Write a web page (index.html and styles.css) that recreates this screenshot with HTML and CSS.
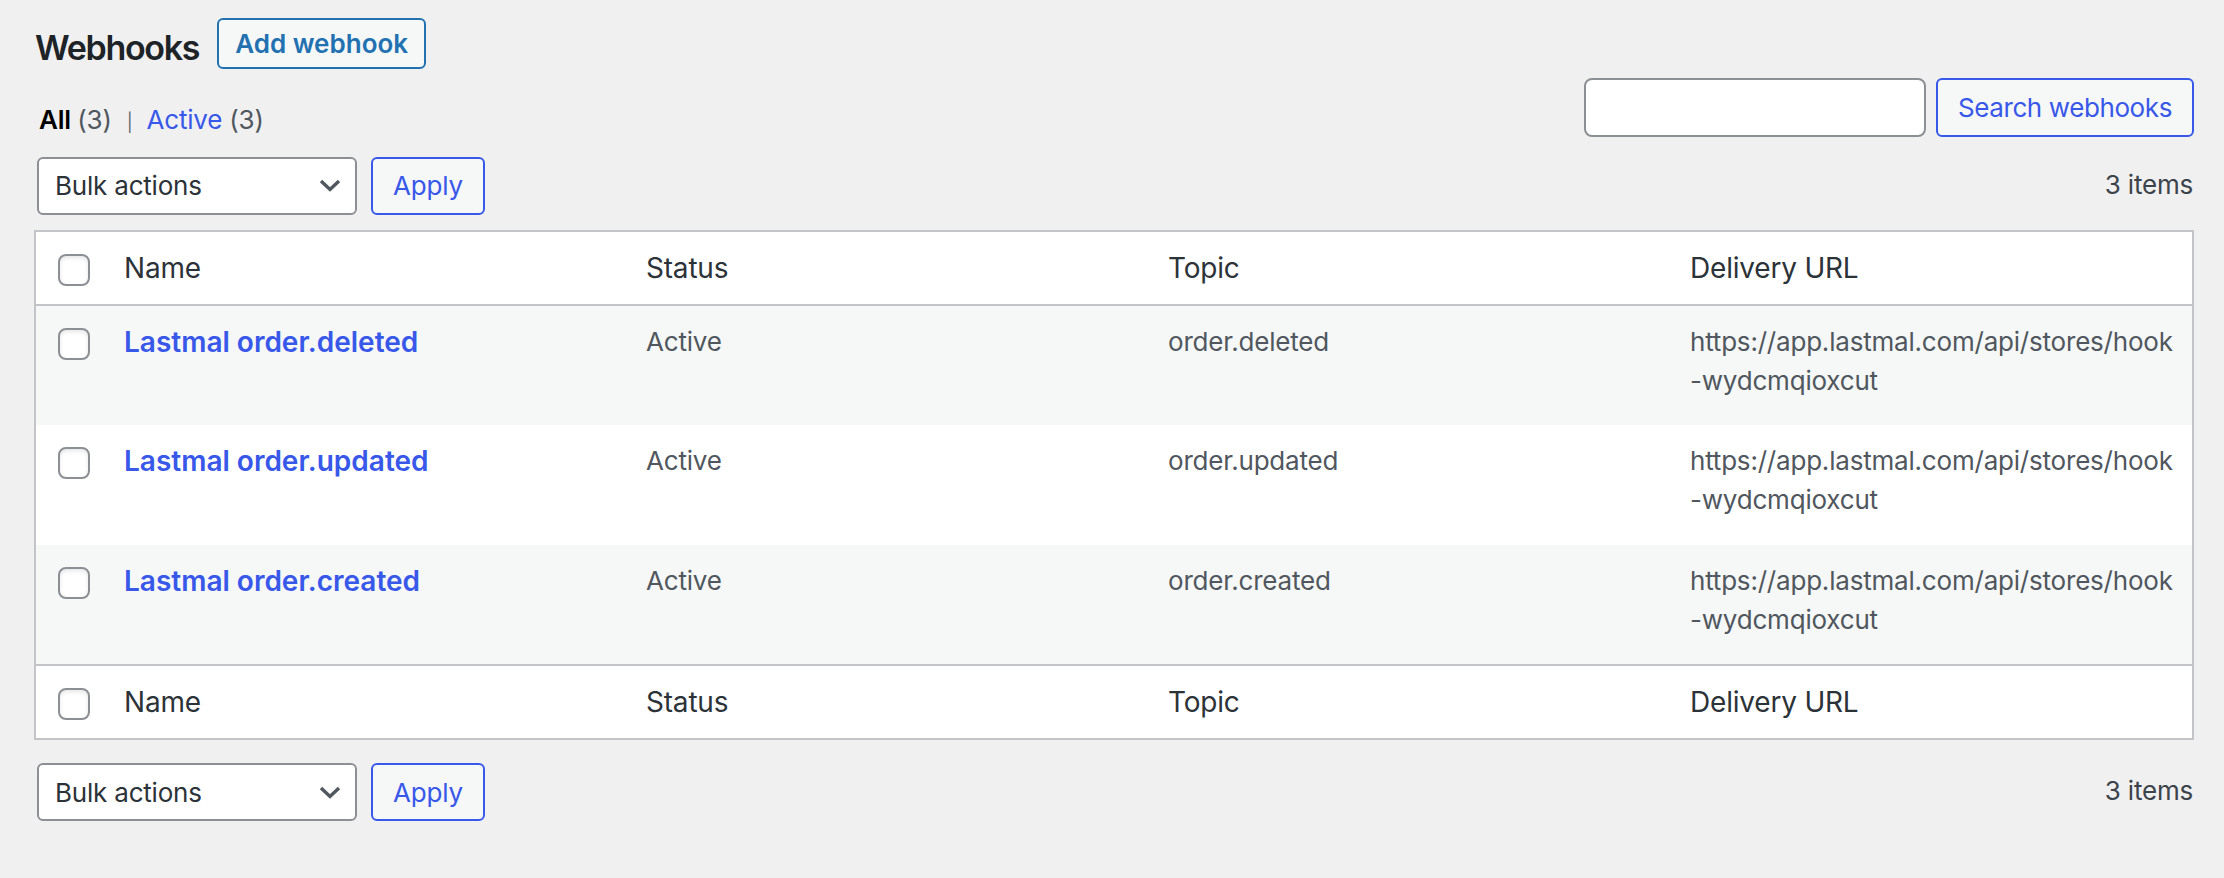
FILE: index.html
```html
<!DOCTYPE html>
<html lang="en">
<head>
<meta charset="utf-8">
<title>Webhooks</title>
<link rel="stylesheet" href="styles.css">
</head>
<body>
<div class="wrap">
  <div class="title-row">
    <h2 class="page-title">Webhooks</h2>
    <a class="btn btn-add" href="#">Add webhook</a>
  </div>

  <div class="filter-row">
    <ul class="subsubsub">
      <li><a class="current" href="#">All <span class="count">(3)</span></a><span class="sep">|</span></li>
      <li><a class="view-link" href="#">Active <span class="count">(3)</span></a></li>
    </ul>
    <div class="search-box">
      <input class="search-input" type="search" aria-label="Search webhooks">
      <button class="btn btn-secondary btn-search" type="button">Search webhooks</button>
    </div>
  </div>

  <div class="tablenav tablenav-top">
    <div class="bulk">
      <div class="select"><span>Bulk actions</span>
        <svg class="chevron" width="22" height="13" viewBox="0 0 22 13"><path d="M2 2 L11 10.5 L20 2" fill="none" stroke="#50575e" stroke-width="3.4"/></svg>
      </div>
      <button class="btn btn-secondary btn-apply" type="button">Apply</button>
    </div>
    <span class="displaying-num">3 items</span>
  </div>

  <table class="list">
    <colgroup><col class="col-check"><col><col><col><col></colgroup>
    <thead>
      <tr>
        <th class="check"><input class="cb" type="checkbox"></th>
        <th>Name</th><th>Status</th><th>Topic</th><th>Delivery URL</th>
      </tr>
    </thead>
    <tbody>
      <tr>
        <td class="check"><input class="cb" type="checkbox"></td>
        <td><a class="row-title" href="#">Lastmal order.deleted</a></td>
        <td>Active</td>
        <td>order.deleted</td>
        <td>https://app.lastmal.com/api/stores/hook<br>-wydcmqioxcut</td>
      </tr>
      <tr>
        <td class="check"><input class="cb" type="checkbox"></td>
        <td><a class="row-title" href="#">Lastmal order.updated</a></td>
        <td>Active</td>
        <td>order.updated</td>
        <td>https://app.lastmal.com/api/stores/hook<br>-wydcmqioxcut</td>
      </tr>
      <tr>
        <td class="check"><input class="cb" type="checkbox"></td>
        <td><a class="row-title" href="#">Lastmal order.created</a></td>
        <td>Active</td>
        <td>order.created</td>
        <td>https://app.lastmal.com/api/stores/hook<br>-wydcmqioxcut</td>
      </tr>
    </tbody>
    <tfoot>
      <tr>
        <th class="check"><input class="cb" type="checkbox"></th>
        <th>Name</th><th>Status</th><th>Topic</th><th>Delivery URL</th>
      </tr>
    </tfoot>
  </table>

  <div class="tablenav tablenav-bottom">
    <div class="bulk">
      <div class="select"><span>Bulk actions</span>
        <svg class="chevron" width="22" height="13" viewBox="0 0 22 13"><path d="M2 2 L11 10.5 L20 2" fill="none" stroke="#50575e" stroke-width="3.4"/></svg>
      </div>
      <button class="btn btn-secondary btn-apply" type="button">Apply</button>
    </div>
    <span class="displaying-num">3 items</span>
  </div>
</div>
</body>
</html>
```

FILE: styles.css
```css
* { box-sizing: border-box; }

body {
  margin: 0;
  background: #f0f0f1;
  font-family: Inter, "Noto Sans", sans-serif;
  color: #3c434a;
  letter-spacing: -0.2px;
}

.wrap {
  padding: 18px 30px 0 34px;
}

/* title */
.title-row {
  display: flex;
  align-items: flex-start;
  height: 51px;
}

.page-title {
  margin: 4px 18px 0 1px;
  font-size: 34px;
  line-height: 51px;
  font-weight: 600;
  letter-spacing: -1.3px;
  color: #1d2327;
}

.btn {
  display: inline-flex;
  align-items: center;
  justify-content: center;
  font-family: inherit;
  font-size: 26px;
  letter-spacing: -0.2px;
  text-decoration: none;
  border-radius: 6px;
  cursor: pointer;
  white-space: nowrap;
}

.btn-add {
  height: 51px;
  padding: 0 16px;
  border: 2px solid #2271b1;
  color: #2271b1;
  background: #f6f7f7;
  font-weight: 600;
  letter-spacing: 0;
}

.btn-secondary {
  height: 58px;
  padding: 0 20px;
  border: 2px solid #3858e9;
  color: #3858e9;
  background: #f6f7f7;
  font-weight: 400;
}

/* filters + search */
.filter-row {
  margin-top: 9px;
  display: flex;
  justify-content: space-between;
  align-items: flex-start;
}

.subsubsub {
  list-style: none;
  margin: 21.5px 0 0 5px;
  padding: 0;
  display: flex;
  height: 40px;
  font-size: 26px;
  line-height: 40px;
  color: #50575e;
}

.subsubsub a {
  text-decoration: none;
}

.subsubsub .current {
  color: #000;
  font-weight: 600;
}

.subsubsub .current .count {
  font-weight: 400;
  color: #50575e;
}

.subsubsub .view-link {
  color: #3858e9;
}

.subsubsub .view-link .count {
  color: #50575e;
}

.subsubsub .sep {
  display: inline-block;
  color: #646970;
  font-size: 18px;
  line-height: 18px;
  margin: 0 14px 0 15px;
}

.search-box {
  display: flex;
  gap: 10px;
}

.search-input {
  width: 342px;
  height: 59px;
  border: 2px solid #8c8f94;
  border-radius: 8px;
  background: #fff;
  margin: 0;
}

.btn-search {
  height: 59px;
  letter-spacing: -0.4px;
}

/* tablenav */
.tablenav {
  display: flex;
  justify-content: space-between;
  align-items: center;
  height: 58px;
}

.tablenav-top {
  margin-top: 17px;
}

.tablenav-bottom {
  margin-top: 23px;
}

.bulk {
  display: flex;
  align-items: center;
  gap: 14px;
  margin-left: 3px;
}

.select {
  width: 320px;
  height: 58px;
  border: 2px solid #8c8f94;
  border-radius: 6px;
  background: #fff;
  padding: 0 14px 0 16px;
  display: flex;
  align-items: center;
  justify-content: space-between;
  font-size: 26px;
  color: #2c3338;
}

.chevron {
  display: block;
}

.displaying-num {
  font-size: 26px;
  color: #3c434a;
  margin-bottom: 3px;
  margin-right: 1px;
}

/* table */
.list {
  width: 100%;
  margin-top: 15px;
  border: 2px solid #c3c4c7;
  border-collapse: separate;
  border-spacing: 0;
  table-layout: fixed;
  background: #fff;
}

.col-check {
  width: 68px;
}

.list th {
  text-align: left;
  font-weight: 400;
  font-size: 28px;
  line-height: 40px;
  padding: 16px 20px;
  color: #2c3338;
  vertical-align: top;
}

.list thead th {
  border-bottom: 2px solid #c3c4c7;
}

.list tfoot th {
  border-top: 2px solid #c3c4c7;
}

.list tbody tr {
  height: 119.5px;
}

.list tbody tr:nth-child(odd) {
  background: #f6f7f7;
}

.list td {
  vertical-align: top;
  padding: 16px 20px;
  font-size: 26px;
  line-height: 39px;
  color: #50575e;
}

.list .check {
  padding: 22px 0 0 22px;
}

.row-title {
  color: #3858e9;
  font-weight: 600;
  font-size: 28px;
  line-height: 40px;
  letter-spacing: 0;
  text-decoration: none;
}

.cb {
  appearance: none;
  -webkit-appearance: none;
  display: block;
  margin: 0;
  width: 32px;
  height: 32px;
  border: 2px solid #8c8f94;
  border-radius: 8px;
  background: #fff;
  box-shadow: inset 0 2px 4px rgba(0, 0, 0, 0.1);
}
```
